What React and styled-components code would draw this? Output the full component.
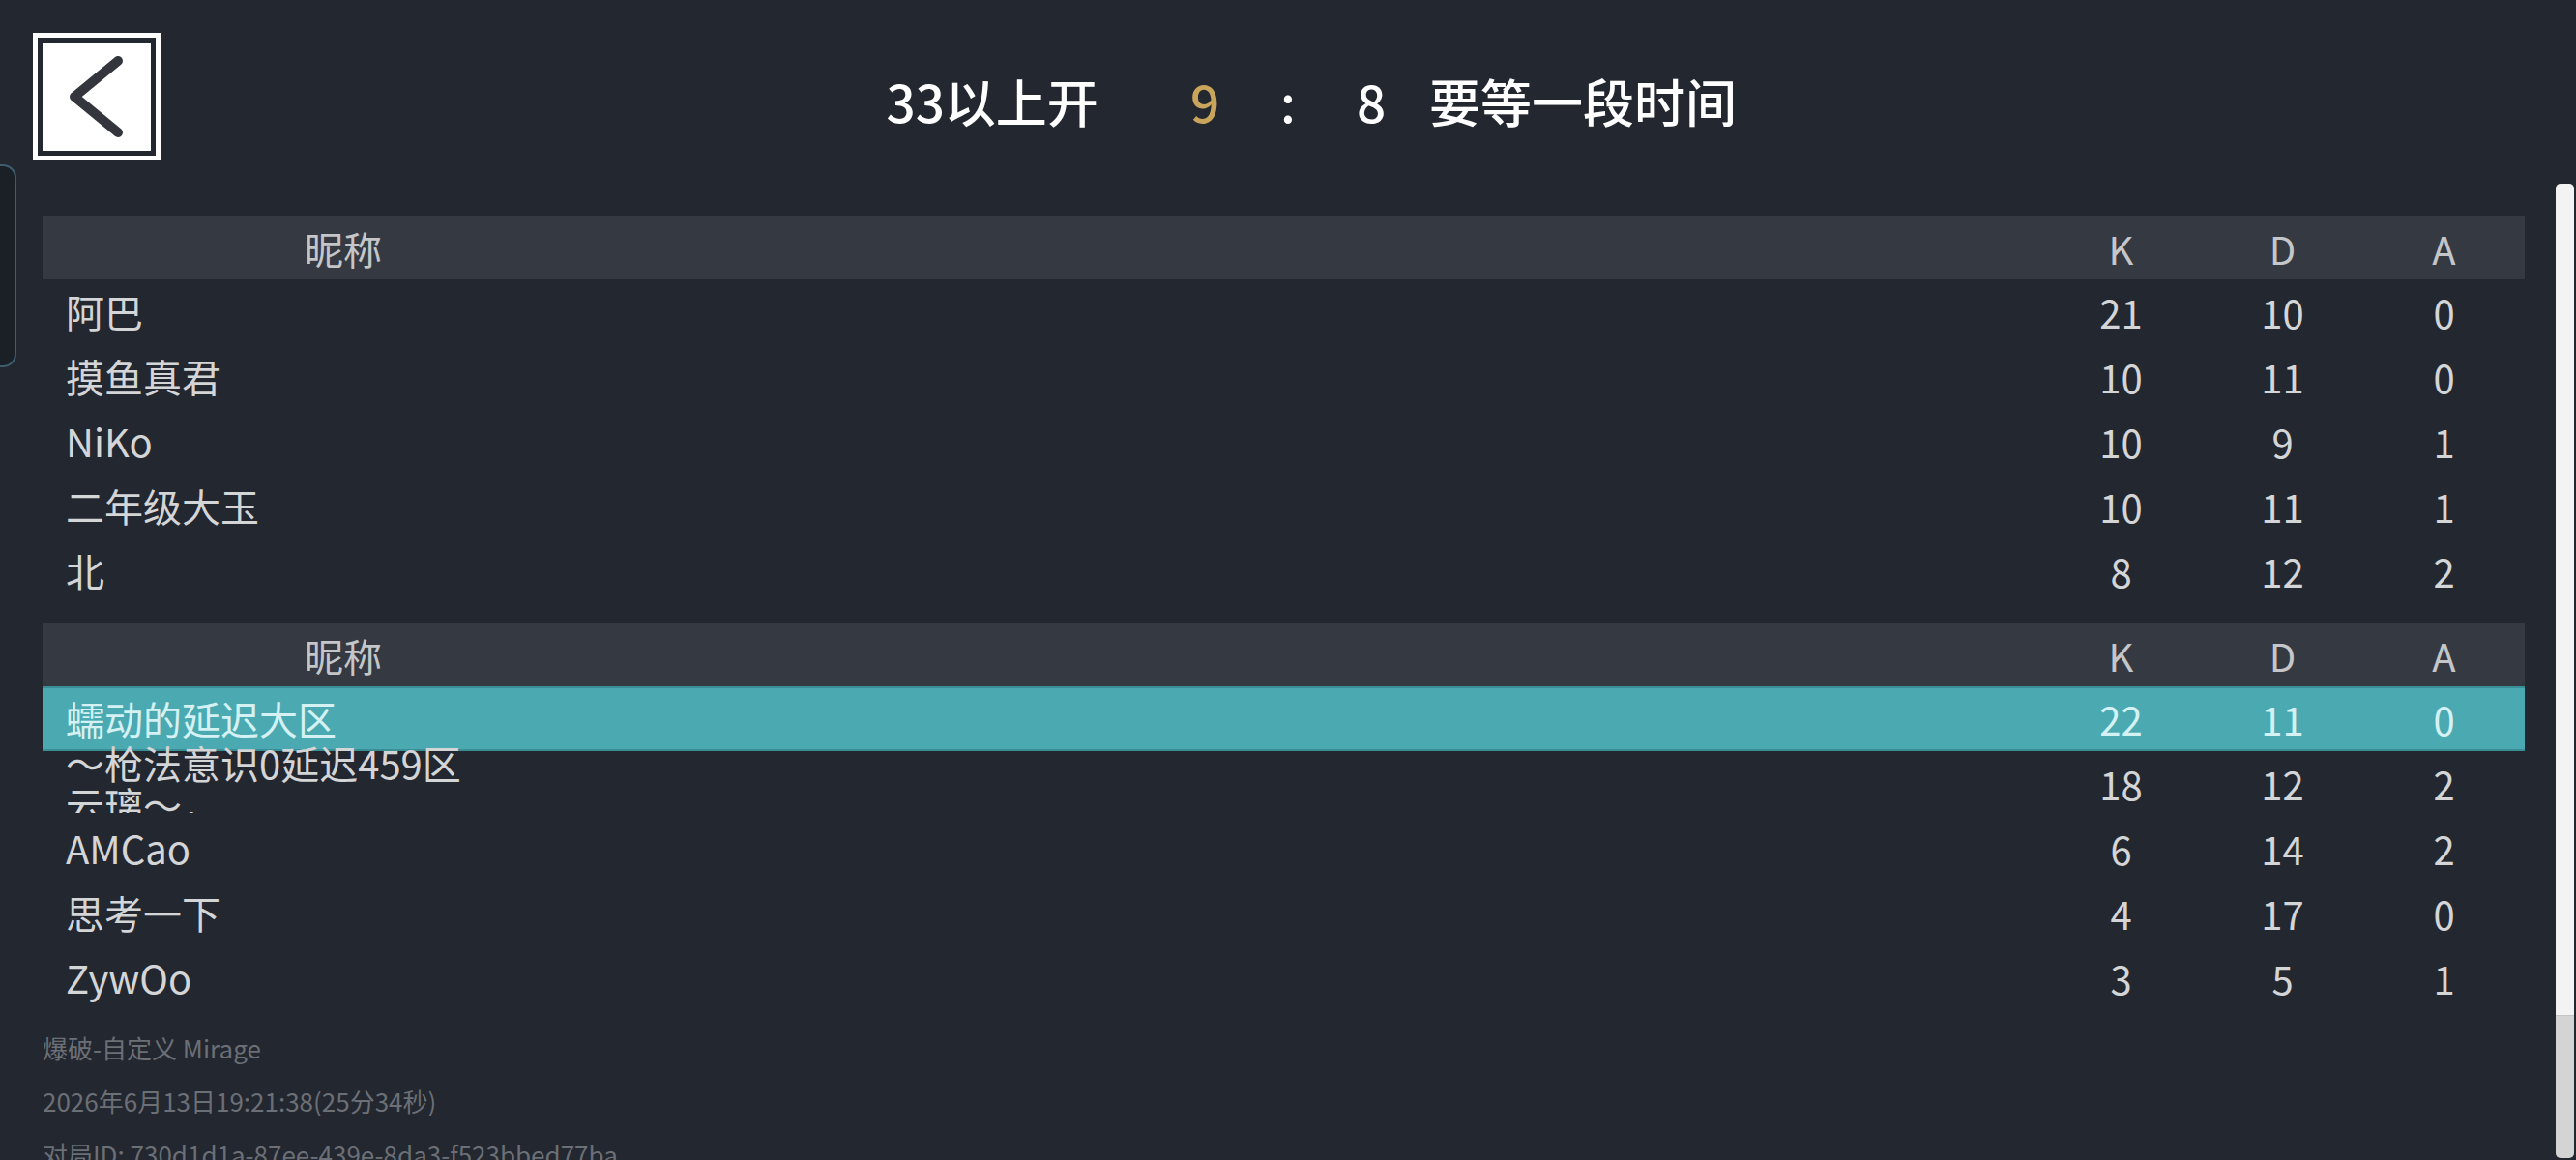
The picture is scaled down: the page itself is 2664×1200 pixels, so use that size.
import React from 'react'
import styled, { createGlobalStyle } from 'styled-components'

const colors = {
  page: '#23272f',
  head: '#353941',
  text: '#d4d5d7',
  headText: '#c4c6c9',
  muted: '#6b6f76',
  gold: '#c9a55c',
  teal: '#4ba9b1',
  tealEdge: '#3a8f97',
  tealText: '#d4f1f3',
}

const GlobalStyle = createGlobalStyle`
  html, body {
    margin: 0;
    padding: 0;
    background: ${colors.page};
  }
  body {
    font-family: "Noto Sans CJK SC", "Noto Sans", sans-serif;
    color: ${colors.text};
  }
  * {
    box-sizing: border-box;
  }
`

const Page = styled.div`
  position: relative;
  width: 100%;
  height: 1200px;
  overflow: hidden;
  background: ${colors.page};
  display: flex;
  flex-direction: column;
`

// little pull-out handle hugging the left edge
const SideHandle = styled.div`
  position: absolute;
  left: -20px;
  top: 170px;
  width: 37px;
  height: 210px;
  border: 2px solid #3e5d6c;
  border-radius: 14px;
  background: #1b1f26;
`

const TopBar = styled.header`
  height: 190px;
  flex-shrink: 0;
  display: grid;
  grid-template-columns: 1fr auto 1fr;
  align-items: center;
  padding-top: 10px;
`

const TopLeft = styled.div`
  display: flex;
  align-items: center;
  justify-content: space-between;
  padding-left: 34px;
`

const TopRight = styled.div`
  display: flex;
  align-items: center;
`

const BackButton = styled.button`
  width: 132px;
  height: 132px;
  padding: 5px;
  border: 5px solid #ffffff;
  background: ${colors.page};
  cursor: pointer;
  display: flex;
`

const BackFace = styled.span`
  flex: 1;
  background: #ffffff;
  display: flex;
  align-items: center;
  justify-content: center;
`

const TitleText = styled.span`
  font-size: 53px;
  line-height: 1.2;
  font-weight: 500;
  padding-top: 10px;
  white-space: nowrap;
  color: ${props => (props.$gold ? colors.gold : '#ffffff')};
  margin-left: ${props => props.$ml || 0}px;
  margin-right: ${props => props.$mr || 0}px;
`

const TeamSide = styled.div`
  display: flex;
  align-items: center;
`

const Body = styled.div`
  flex: 1;
  display: flex;
  min-height: 0;
`

const Main = styled.main`
  flex: 1;
  padding: 33px 32px 0 44px;
  display: flex;
  flex-direction: column;
`

const Table = styled.section`
  display: flex;
  flex-direction: column;
  margin-bottom: ${props => props.$gap || 0}px;
`

const gridCols = `
  display: grid;
  grid-template-columns: 622px 1fr 167px 167px 167px;
  grid-template-rows: minmax(0, 1fr);
  align-items: center;
`

const HeadRow = styled.div`
  ${gridCols}
  height: 66px;
  background: ${colors.head};
  font-size: 40px;
  color: ${colors.headText};
`

const HeadCell = styled.div`
  text-align: center;
  line-height: 1;
  padding-top: 2px;
`

const Row = styled.div`
  ${gridCols}
  height: 67px;
  font-size: 40px;
  color: ${props => (props.$active ? colors.tealText : colors.text)};
  background: ${props => (props.$active ? colors.teal : 'transparent')};
  border-top: ${props => (props.$active ? `2px solid ${colors.tealEdge}` : 'none')};
  border-bottom: ${props => (props.$active ? `2px solid ${colors.tealEdge}` : 'none')};
`

// a long name wraps onto two lines, spills upward and gets cut at the row's bottom
const NameCell = styled.div`
  align-self: stretch;
  display: flex;
  flex-direction: column;
  justify-content: center;
  padding-left: 24px;
  line-height: 43px;
  white-space: nowrap;
  ${props => props.$cut && 'clip-path: inset(-60px -400px 3px -10px);'}
`

const NumCell = styled.div`
  text-align: center;
  line-height: 1;
`

const Footer = styled.footer`
  padding-top: 11px;
  font-size: 26px;
  line-height: 55px;
  color: ${colors.muted};
  white-space: nowrap;
`

const ScrollRail = styled.div`
  width: 19px;
  margin-right: 2px;
  margin-bottom: 2px;
  display: flex;
  flex-direction: column;
`

const ScrollTrack = styled.div`
  flex: 1;
  background: #f3f3f3;
  border-radius: 5px 5px 0 0;
`

const ScrollThumb = styled.div`
  height: 148px;
  background: #d4d4d4;
  border-top: 1px solid #c4c4c4;
  border-radius: 0 0 5px 5px;
`

const ChevronLeft = () => (
  <svg width="112" height="112" viewBox="0 0 112 112">
    <polyline
      points="78,19 33,56 78,93"
      fill="none"
      stroke="#33363d"
      strokeWidth="10"
      strokeLinecap="round"
      strokeLinejoin="round"
    />
  </svg>
)

const teamA = [
  { name: '阿巴', k: 21, d: 10, a: 0 },
  { name: '摸鱼真君', k: 10, d: 11, a: 0 },
  { name: 'NiKo', k: 10, d: 9, a: 1 },
  { name: '二年级大玉', k: 10, d: 11, a: 1 },
  { name: '北', k: 8, d: 12, a: 2 },
]

const teamB = [
  { name: '蠕动的延迟大区', k: 22, d: 11, a: 0, me: true },
  { name: ['～枪法意识0延迟459区', '云璃～，'], k: 18, d: 12, a: 2 },
  { name: 'AMCao', k: 6, d: 14, a: 2 },
  { name: '思考一下', k: 4, d: 17, a: 0 },
  { name: 'ZywOo', k: 3, d: 5, a: 1 },
]

function ScoreTable({ players, gap }) {
  return (
    <Table $gap={gap}>
      <HeadRow>
        <HeadCell>昵称</HeadCell>
        <span />
        <HeadCell>K</HeadCell>
        <HeadCell>D</HeadCell>
        <HeadCell>A</HeadCell>
      </HeadRow>
      {players.map((p, i) => {
        const lines = Array.isArray(p.name) ? p.name : [p.name]
        return (
          <Row key={i} $active={p.me}>
            <NameCell $cut={lines.length > 1}>
              {lines.map(line => (
                <div key={line}>{line}</div>
              ))}
            </NameCell>
            <span />
            <NumCell>{p.k}</NumCell>
            <NumCell>{p.d}</NumCell>
            <NumCell>{p.a}</NumCell>
          </Row>
        )
      })}
    </Table>
  )
}

export default function App() {
  return (
    <Page>
      <GlobalStyle />
      <SideHandle />
      <TopBar>
        <TopLeft>
          <BackButton aria-label="返回">
            <BackFace>
              <ChevronLeft />
            </BackFace>
          </BackButton>
          <TeamSide>
            <TitleText>33以上开</TitleText>
            <TitleText $gold $ml={95} $mr={63}>
              9
            </TitleText>
          </TeamSide>
        </TopLeft>
        <TitleText>:</TitleText>
        <TopRight>
          <TitleText $ml={63}>8</TitleText>
          <TitleText $ml={45}>要等一段时间</TitleText>
        </TopRight>
      </TopBar>

      <Body>
        <Main>
          <ScoreTable players={teamA} gap={20} />
          <ScoreTable players={teamB} />
          <Footer>
            <div>爆破-自定义 Mirage</div>
            <div>2026年6月13日19:21:38(25分34秒)</div>
            <div>对局ID: 730d1d1a-87ee-439e-8da3-f523bbed77ba</div>
          </Footer>
        </Main>
        <ScrollRail>
          <ScrollTrack />
          <ScrollThumb />
        </ScrollRail>
      </Body>
    </Page>
  )
}
